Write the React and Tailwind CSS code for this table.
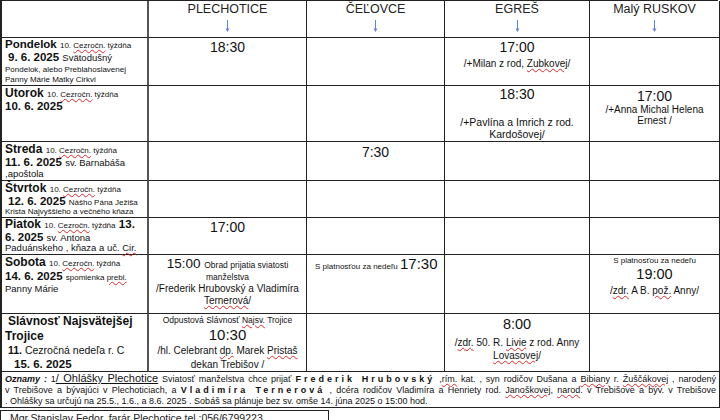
import React from 'react';

// ─── Pomocné komponenty ──────────────────────────────────────────────────────
// červené vlnovkové podčiarknutie (kontrola pravopisu vo Worde)
function Sq({ children }) {
  return (
    <span className="underline decoration-wavy decoration-[#e02828] decoration-1 underline-offset-[1px]">
      {children}
    </span>
  );
}

function Arrow() {
  return (
    <svg width="7" height="12" viewBox="0 0 7 12" className="mx-auto mt-[3px] block">
      <line x1="3.5" y1="0" x2="3.5" y2="9" stroke="#5b86d6" strokeWidth="1" />
      <polygon points="1.5,8.5 5.5,8.5 3.5,12" fill="#5b86d6" />
    </svg>
  );
}

function Head({ children }) {
  return (
    <div className="border-r border-b border-[#222] pt-[1px] text-center text-[12.5px] leading-[15px] text-[#222]">
      <div>{children}</div>
      <Arrow />
    </div>
  );
}

function Cell({ className = '', children }) {
  return <div className={`border-r border-b border-[#222] ${className}`}>{children}</div>;
}

// prvý stĺpec – deň a dátum
function Day({ children }) {
  return (
    <div className="border-r-2 border-b border-r-[#555] border-b-[#222] pl-[3px] text-[8px]">
      {children}
    </div>
  );
}

// malý text vnútri riadku s tučným písmom – nesmie zväčšovať výšku riadku
function Sm({ size = 'text-[8px]', children }) {
  return <span className={`${size} font-normal leading-none`}>{children}</span>;
}

const week = (
  <Sm>
    {' '}10. <Sq>Cezročn.</Sq> týždňa
  </Sm>
);

// ─── Hlavný komponent ────────────────────────────────────────────────────────
export default function App() {
  return (
    <div className="w-[720px] h-[420px] overflow-hidden bg-white text-[#111] font-['Liberation_Sans',Arial,sans-serif]">
      <div className="grid w-[718px] grid-cols-[147px_158px_138px_145px_130px] grid-rows-[37px_48px_56px_39px_37px_37px_59px_58px_36px] border-l-2 border-t border-[#222]">
        {/* Hlavička */}
        <Day />
        <Head>PLECHOTICE</Head>
        <Head>ČEĽOVCE</Head>
        <Head>EGREŠ</Head>
        <Head>Malý RUSKOV</Head>

        {/* Pondelok */}
        <Day>
          <div className="text-[11.5px] font-bold leading-[13px]">Pondelok {week}</div>
          <div className="pl-[3px] text-[11.5px] font-bold leading-[13px]">9. 6. 2025 <Sm size="text-[9.5px]"> Svätodušný</Sm></div>
          <div className="leading-[11px]">Pondelok, alebo Preblahoslavenej</div>
          <div className="leading-[10px]">Panny Márie Matky Cirkvi</div>
        </Day>
        <Cell className="pt-[1px] text-center text-[14px] leading-[16px]">18:30</Cell>
        <Cell />
        <Cell className="pt-[1px] text-center">
          <div className="text-[14px] leading-[16px]">17:00</div>
          <div className="mt-[3px] text-[10px] leading-[12px]">/+Milan z rod, <Sq>Zubkovej</Sq>/</div>
        </Cell>
        <Cell />

        {/* Utorok */}
        <Day>
          <div className="text-[12px] font-bold leading-[14px]">Utorok {week}</div>
          <div className="text-[11.5px] font-bold leading-[13px]">10. 6. 2025</div>
        </Day>
        <Cell />
        <Cell />
        <Cell className="text-center">
          <div className="text-[14px] leading-[16px]">18:30</div>
          <div className="mt-[14px] text-[10.5px] leading-[12px]">/+Pavlína a Imrich z rod.</div>
          <div className="text-[10.5px] leading-[12px]">Kardošovej/</div>
        </Cell>
        <Cell className="pt-[2px] text-center">
          <div className="text-[14px] leading-[16px]">17:00</div>
          <div className="text-[10px] leading-[11px]">/+Anna Michal Helena</div>
          <div className="text-[10px] leading-[11px]">Ernest /</div>
        </Cell>

        {/* Streda */}
        <Day>
          <div className="text-[12px] font-bold leading-[14px]">Streda {week}</div>
          <div className="text-[11.5px] font-bold leading-[13px]">11. 6. 2025 <Sm size="text-[9.5px]"> sv. Barnabáša</Sm></div>
          <div className="text-[9.5px] leading-[10px]">,apoštola</div>
        </Day>
        <Cell />
        <Cell className="pt-[2px] text-center text-[14px] leading-[16px]">7:30</Cell>
        <Cell />
        <Cell />

        {/* Štvrtok */}
        <Day>
          <div className="pt-[1px] text-[12px] font-bold leading-[13px]">Štvrtok {week}</div>
          <div className="pl-[3px] text-[11.5px] font-bold leading-[12px]">12. 6. 2025 <Sm>Nášho Pána Ježiša</Sm></div>
          <div className="leading-[10px]">Krista  Najvyššieho a večného kňaza</div>
        </Day>
        <Cell />
        <Cell />
        <Cell />
        <Cell />

        {/* Piatok */}
        <Day>
          <div className="text-[12px] font-bold leading-[13px]">Piatok {week} <span className="text-[11.5px]">13.</span></div>
          <div className="text-[11.5px] font-bold leading-[12px]">6. 2025 <Sm size="text-[9.5px]"> sv. Antona</Sm></div>
          <div className="text-[9.5px] leading-[10px]">Paduánskeho , kňaza a uč. <Sq>Cir.</Sq></div>
        </Day>
        <Cell className="pt-[1px] text-center text-[14px] leading-[16px]">17:00</Cell>
        <Cell />
        <Cell />
        <Cell />

        {/* Sobota */}
        <Day>
          <div className="text-[12px] font-bold leading-[14px]">Sobota {week}</div>
          <div className="text-[11.5px] font-bold leading-[14px]">14. 6.  2025 <Sm> spomienka <Sq>prebl.</Sq></Sm></div>
          <div className="text-[9.5px] leading-[11px]">Panny Márie</div>
        </Day>
        <Cell className="pt-[1px] text-center">
          <div className="text-[13.5px] leading-[15px]">15:00 <Sm size="text-[8.5px]">Obrad prijatia sviatosti</Sm></div>
          <div className="text-[8.5px] leading-[12px]">manželstva</div>
          <div className="text-[10px] leading-[12px]">/Frederik Hrubovský a Vladimíra</div>
          <div className="text-[10px] leading-[12px]"><Sq>Ternerová</Sq>/</div>
        </Cell>
        <Cell className="pl-[8px] pt-[1px] text-[15px] leading-[16px]">
          <Sm>S platnosťou za nedeľu </Sm>17:30
        </Cell>
        <Cell />
        <Cell className="text-center">
          <div className="text-[8px] leading-[11px]">S platnosťou za nedeľu</div>
          <div className="text-[14.5px] leading-[17px]">19:00</div>
          <div className="mt-[2px] text-[10px] leading-[12px]">/<Sq>zdr.</Sq> A B. <Sq>pož.</Sq> Anny/</div>
        </Cell>

        {/* Najsvätejšia Trojica */}
        <Day>
          <div className="pl-[3px] text-[12px] font-bold leading-[15px]">Slávnosť Najsvätejšej</div>
          <div className="text-[12px] font-bold leading-[14px]">Trojice</div>
          <div className="pl-[3px] text-[10.5px] leading-[14px]"><b>11.</b> Cezročná nedeľa r. C</div>
          <div className="pl-[9px] text-[11.5px] font-bold leading-[14px]">15. 6. 2025</div>
        </Day>
        <Cell className="text-center">
          <div className="text-[8.5px] leading-[12px]">Odpustová Slávnosť <Sq>Najsv.</Sq> Trojice</div>
          <div className="text-[15px] leading-[17px]">10:30</div>
          <div className="mt-[1px] text-[10px] leading-[14px]">/hl. Celebrant <Sq>dp.</Sq> Marek <Sq>Pristaš</Sq></div>
          <div className="text-[10px] leading-[14px]">dekan Trebišov /</div>
        </Cell>
        <Cell />
        <Cell className="pt-[2px] text-center">
          <div className="text-[14.5px] leading-[17px]">8:00</div>
          <div className="mt-[3px] text-[10px] leading-[13px]">/<Sq>zdr.</Sq> 50. R. <Sq>Livie</Sq> z rod. Anny</div>
          <div className="text-[10px] leading-[13px]"><Sq>Lovasovej</Sq>/</div>
        </Cell>
        <Cell />

        {/* Oznamy */}
        <Cell className="col-span-5 px-[3px] pt-[1px] text-[9px] leading-[11px]">
          <div className="whitespace-nowrap text-justify [text-align-last:justify]">
            <span className="font-bold italic">Oznamy :</span> 1<span className="text-[11px] leading-none underline">/ Ohlášky Plechotice</span> Sviatosť manželstva chce prijať{' '}
            <span className="font-bold tracking-[3px]">Frederik Hrubovský</span> ,<Sq>rím.</Sq> kat. ,  syn rodičov Dušana a <Sq>Bibiany</Sq> r. <Sq>Žuščákovej</Sq> , narodený
          </div>
          <div className="whitespace-nowrap text-justify [text-align-last:justify]">
            v Trebišove a bývajúci v  Plechoticiach, a <span className="font-bold tracking-[3px]">Vladimíra Ternerová</span> , dcéra rodičov Vladimíra a Henriety rod. <Sq>Janoškovej</Sq>, <Sq>narod</Sq>. v Trebišove a býv. v Trebišove
          </div>
          <div className="whitespace-nowrap">
            . Ohlášky sa určujú na 25.5., 1.6., a 8.6. 2025 . Sobáš sa plánuje bez sv. omše  14. júna 2025 o 15:00 hod.
          </div>
        </Cell>
      </div>

      {/* Podpis */}
      <div className="mt-[2px] h-[20px] w-[329px] border-l border-t border-r border-[#222] pl-[9px] pt-[1px] text-[10.5px] leading-[12px] text-[#222]">
        Mgr.Stanislav Fedor, farár Plechotice tel.:056/6799223
      </div>
    </div>
  );
}
